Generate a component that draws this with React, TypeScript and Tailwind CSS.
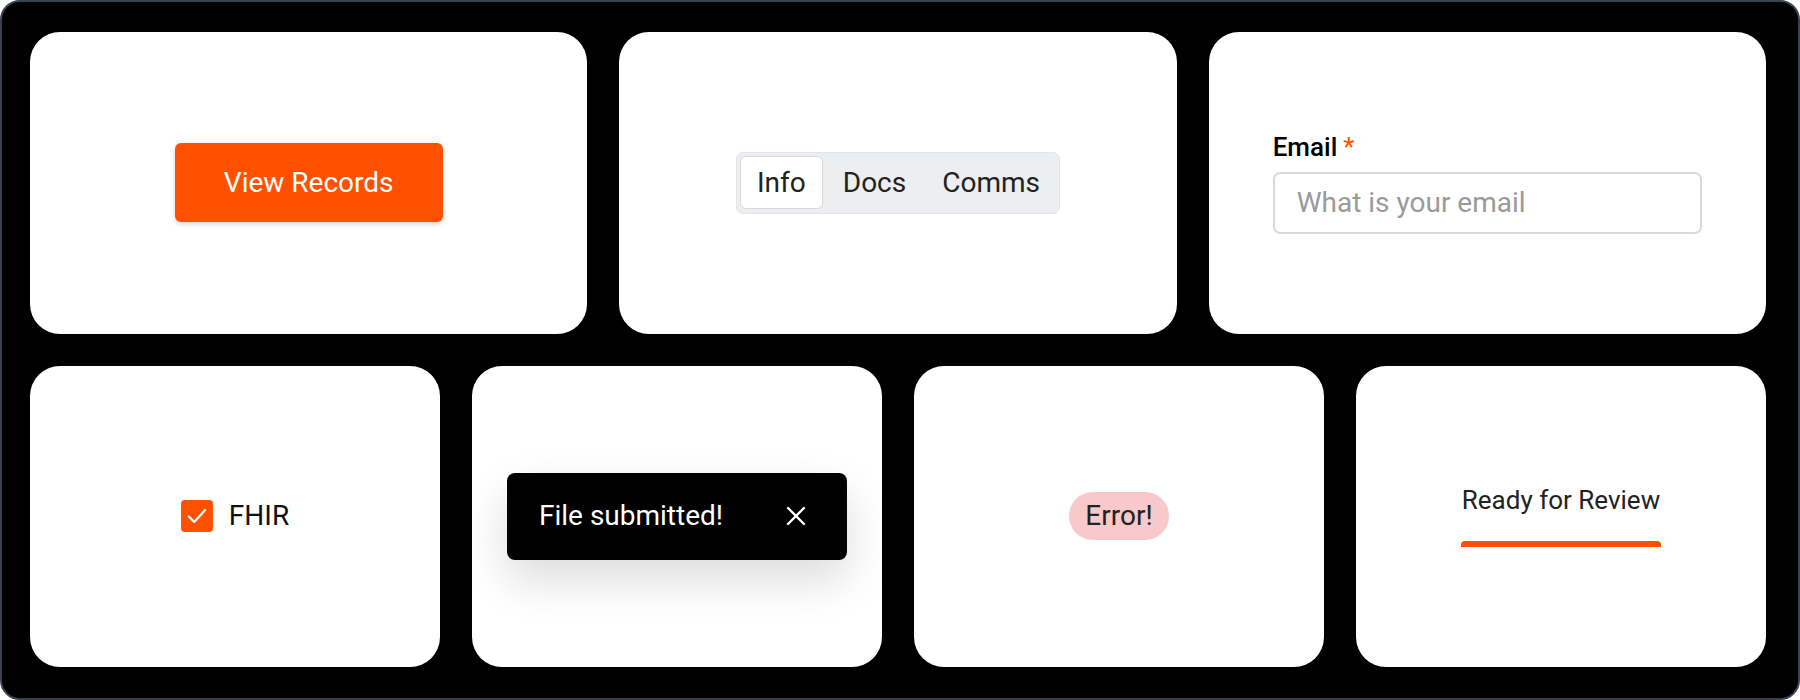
import React from "react"

const font = { fontFamily: "Roboto, 'Liberation Sans', sans-serif" }

function Card({ children, className = "" }: { children: React.ReactNode; className?: string }) {
  return <div className={`bg-white rounded-[30px] flex items-center justify-center ${className}`}>{children}</div>
}

export default function App() {
  return (
    <div className="w-[1800px] h-[700px] bg-white" style={font}>
      <div className="w-full h-full bg-black border-2 border-[#3a4150] rounded-[20px] pt-[30px] pl-[28px] pr-[32px] pb-[31px] flex flex-col gap-8">
        <div className="grid grid-cols-3 gap-8 flex-1">
          <Card>
            <button className="w-[268px] h-[79px] rounded-[6px] bg-[#ff5000] text-white text-[28px] font-normal shadow-[0_2px_5px_rgba(0,0,0,0.18)]">
              View Records
            </button>
          </Card>
          <Card>
            <div className="h-[62px] flex items-center gap-[4px] px-[3px] rounded-[7px] bg-[#eceef0] border border-[#e2e4e7]">
              <div className="h-[53px] px-4 flex items-center rounded-[6px] bg-white border border-[#d6d8db] text-[28px] text-[#222]">Info</div>
              <div className="h-[53px] px-4 flex items-center text-[28px] text-[#222]">Docs</div>
              <div className="h-[53px] px-4 flex items-center text-[28px] text-[#222]">Comms</div>
            </div>
          </Card>
          <Card className="flex-col !items-stretch px-16">
            <label className="flex items-start gap-[6px] text-[26px] leading-[30px] font-medium text-black mb-[10px]">
              Email <span className="text-[#ff5000] font-normal">*</span>
            </label>
            <div className="h-[62px] rounded-[7px] border-2 border-[#dadada] flex items-center px-[22px] text-[28px] text-[#9a9a9a]">
              What is your email
            </div>
          </Card>
        </div>
        <div className="grid grid-cols-4 gap-8 flex-1">
          <Card>
            <div className="flex items-center gap-4">
              <div className="w-8 h-8 rounded-[4px] bg-[#ff5000] flex items-center justify-center">
                <svg width="26" height="26" viewBox="0 0 24 24" fill="none" stroke="white" strokeWidth="2.1" strokeLinecap="round" strokeLinejoin="round">
                  <path d="M4.5 12.5l5 5L19.5 6.5" />
                </svg>
              </div>
              <span className="text-[28px] text-[#111]">FHIR</span>
            </div>
          </Card>
          <Card>
            <div className="w-[340px] h-[87px] rounded-[8px] bg-black flex items-center justify-between pl-8 pr-[41px] shadow-[0_20px_45px_rgba(0,0,0,0.14)]">
              <span className="text-[28px] text-white">File submitted!</span>
              <svg width="20" height="20" viewBox="0 0 20 20" fill="none" stroke="white" strokeWidth="2.4" strokeLinecap="round">
                <path d="M2 2l16 16M18 2L2 18" />
              </svg>
            </div>
          </Card>
          <Card>
            <span className="h-[48px] px-4 rounded-full bg-[#f8c8ca] flex items-center text-[28px] text-[#222]">Error!</span>
          </Card>
          <Card>
            <div className="flex flex-col items-stretch">
              <span className="text-[26px] leading-[30px] font-normal text-[#222] px-[1px]">Ready for Review</span>
              <div className="h-[6px] mt-[26px] rounded-t-[4px] bg-[#ff5000]" />
            </div>
          </Card>
        </div>
      </div>
    </div>
  )
}
